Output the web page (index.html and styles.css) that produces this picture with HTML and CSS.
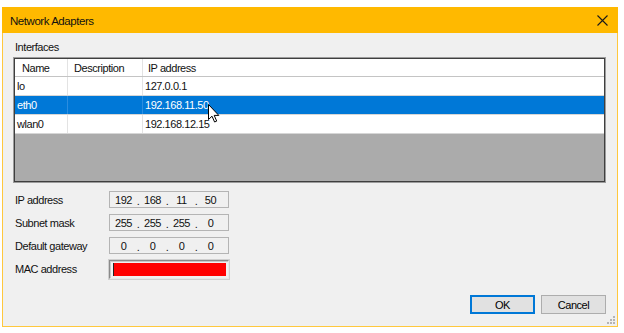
FILE: index.html
```html
<!DOCTYPE html>
<html lang="en">
<head>
    <meta charset="UTF-8">
    <title>Network Adapters</title>
    <link rel="stylesheet" href="styles.css">
</head>
<body>
    <div class="window">
        <div class="titlebar">
            <span class="title">Network Adapters</span>
            <svg class="close" width="11" height="11" viewBox="0 0 11 11">
                <path d="M0.5 0.5 L10.5 10.5 M10.5 0.5 L0.5 10.5" stroke="#1a1a1a" stroke-width="1.1" fill="none"/>
            </svg>
        </div>

        <div class="client">
            <div class="group-label">Interfaces</div>
            <div class="listbox">
                <table class="list">
                    <tr class="head">
                        <td class="c-name">Name</td>
                        <td class="c-desc">Description</td>
                        <td class="c-ip">IP address</td>
                    </tr>
                    <tr>
                        <td>lo</td>
                        <td></td>
                        <td>127.0.0.1</td>
                    </tr>
                    <tr class="selected">
                        <td>eth0</td>
                        <td></td>
                        <td>192.168.11.50</td>
                    </tr>
                    <tr>
                        <td>wlan0</td>
                        <td></td>
                        <td>192.168.12.15</td>
                    </tr>
                </table>
                <div class="list-empty"></div>
                <svg class="pointer" width="12" height="19" viewBox="0 0 12 19">
                    <path d="M0.5 0.5 L0.5 15.5 L4 12.2 L6.6 18 L8.7 17.1 L6.2 11.4 L10.8 11.4 Z" fill="#fff" stroke="#000" stroke-width="1"/>
                </svg>
            </div>

            <div class="fields">
                <div class="label">IP address</div>
                <div class="ipbox">
                    <span>192</span><i>.</i><span>168</span><i>.</i><span>11</span><i>.</i><span>50</span>
                </div>
                <div class="label">Subnet mask</div>
                <div class="ipbox">
                    <span>255</span><i>.</i><span>255</span><i>.</i><span>255</span><i>.</i><span>0</span>
                </div>
                <div class="label">Default gateway</div>
                <div class="ipbox">
                    <span>0</span><i>.</i><span>0</span><i>.</i><span>0</span><i>.</i><span>0</span>
                </div>
                <div class="label">MAC address</div>
                <div class="macbox"><div class="mac-hidden"></div></div>
            </div>

            <div class="buttons">
                <button class="btn default">OK</button>
                <button class="btn">Cancel</button>
            </div>
            <svg class="grip" width="8" height="8" viewBox="0 0 8 8">
                <rect x="6" y="0" width="2" height="2" fill="#b4b4b4"/>
                <rect x="3" y="3" width="2" height="2" fill="#b4b4b4"/>
                <rect x="6" y="3" width="2" height="2" fill="#b4b4b4"/>
                <rect x="0" y="6" width="2" height="2" fill="#b4b4b4"/>
                <rect x="3" y="6" width="2" height="2" fill="#b4b4b4"/>
                <rect x="6" y="6" width="2" height="2" fill="#b4b4b4"/>
            </svg>
        </div>
    </div>
</body>
</html>
```

FILE: styles.css
```css
body {
    margin: 0;
    background: #fff;
    font-family: 'Liberation Sans', Arial, sans-serif;
    font-size: 11px;
    letter-spacing: -0.45px;
    color: #111;
}
.window {
    margin: 7px 0 0 2px;
    width: 616px;
    height: 320px;
    box-sizing: border-box;
    border: 1px solid #ffc83d;
    border-top: none;
    display: flex;
    flex-direction: column;
    background: #f0f0f0;
}
.titlebar {
    height: 26px;
    background: #ffb900;
    margin: 0 -1px;
    display: flex;
    align-items: center;
    justify-content: space-between;
    padding: 0 10px 0 8px;
    font-size: 11.5px;
}
.title {
    padding-top: 2px;
}
.client {
    flex: 1;
    display: flex;
    flex-direction: column;
    position: relative;
}
.group-label {
    margin: 7px 0 0 12px;
    line-height: 14px;
}
.listbox {
    margin: 3px 11px 0 10px;
    height: 126px;
    box-sizing: border-box;
    border: 1px solid #9c9c9c;
    box-shadow: inset 0 0 0 1px #3f3f3f;
    padding: 1px;
    display: flex;
    flex-direction: column;
    position: relative;
}
.list {
    width: 100%;
    border-collapse: collapse;
    background: #fff;
}
.list td {
    height: 18px;
    padding: 0 0 0 2px;
    border-right: 1px solid #e3e3e3;
    border-bottom: 1px solid #d6d6d6;
    white-space: nowrap;
}
.list .head td {
    height: 17px;
    border-bottom-color: #c4c4c4;
    border-right-color: #e3e3e3;
}
.list .c-name {
    width: 45px;
    padding-left: 7px;
}
.list .c-desc {
    width: 68px;
    padding-left: 6px;
}
.list .c-ip {
    padding-left: 5px;
}
.list td:last-child {
    border-right: none;
}
.list .selected td {
    background: #0078d7;
    color: #fff;
    border-right-color: #2b8de0;
}
.list-empty {
    flex: 1;
    background: #ababab;
}
.pointer {
    position: absolute;
    left: 194px;
    top: 46px;
}
.fields {
    margin: 8px 0 0 12px;
    display: grid;
    grid-template-columns: 94px 120px;
    grid-auto-rows: 17px;
    row-gap: 6px;
    align-items: center;
}
.ipbox {
    height: 17px;
    box-sizing: border-box;
    border: 1px solid #b4b4b4;
    display: flex;
    align-items: center;
    padding-left: 3px;
}
.ipbox span {
    width: 21px;
    text-align: center;
}
.ipbox i {
    font-style: normal;
    width: 8px;
    text-align: center;
    padding-top: 3px;
}
.macbox {
    height: 19px;
    box-sizing: border-box;
    border: 1px solid;
    border-color: #8a8a8a #e8e8e8 #e8e8e8 #8a8a8a;
    box-shadow: inset 1px 1px 0 #c8c8c8, 0 0 0 1px #cfcfcf;
    padding: 2px 2px 2px 3px;
    align-self: start;
}
.mac-hidden {
    height: 13px;
    background: #ff0000;
    border-left: 1px solid #222;
}
.buttons {
    margin-top: auto;
    display: flex;
    justify-content: flex-end;
    gap: 6px;
    padding: 0 11px 12px 0;
}
.btn {
    width: 65px;
    height: 19px;
    font-family: inherit;
    font-size: 11px;
    letter-spacing: -0.45px;
    background: #e1e1e1;
    border: 1px solid #adadad;
    padding: 0;
    color: #000;
}
.btn.default {
    border: 2px solid #0078d7;
}
.grip {
    position: absolute;
    right: 2px;
    bottom: 2px;
}
```
